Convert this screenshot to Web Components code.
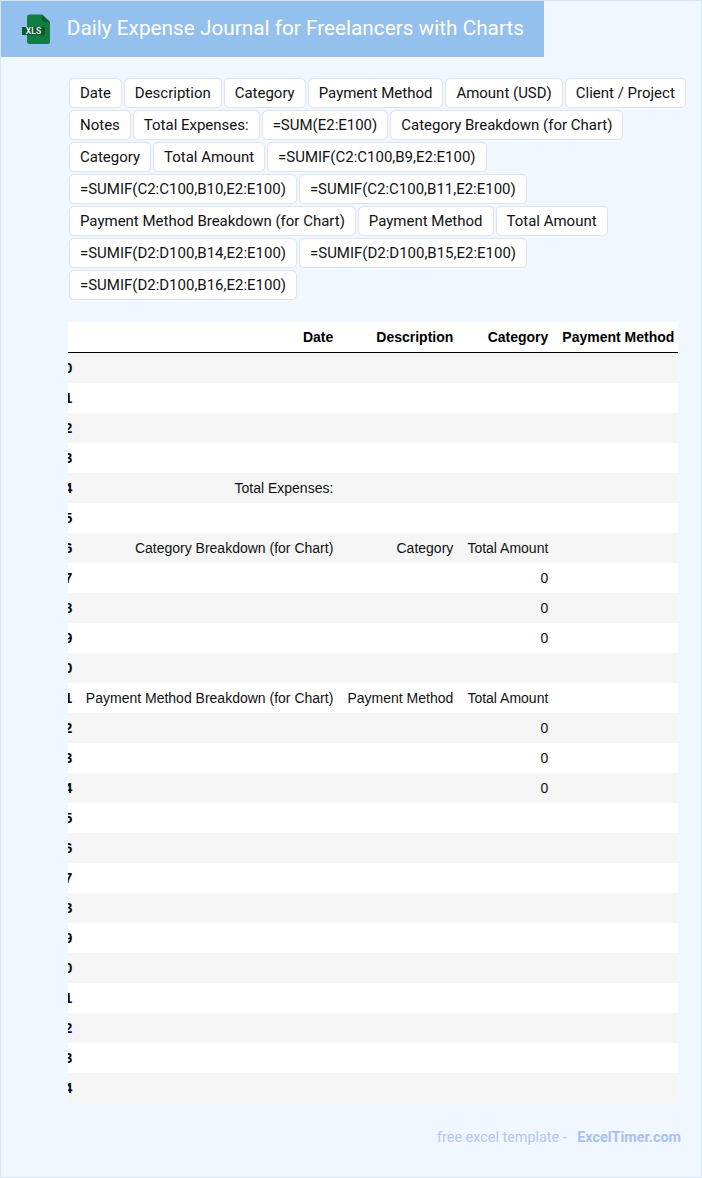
<!DOCTYPE html>
<html>
<head>
<meta charset="utf-8">
<title>Daily Expense Journal for Freelancers with Charts</title>
<style>
  html, body { margin: 0; padding: 0; }
  body { font-family: Roboto, "Liberation Sans", sans-serif; }
</style>
</head>
<body>
<journal-page>
  <title-bar>Daily Expense Journal for Freelancers with Charts</title-bar>
  <chip-list></chip-list>
  <sheet-table></sheet-table>
  <page-footer></page-footer>
</journal-page>

<script>
class JournalPage extends HTMLElement {
  constructor() {
    super();
    this.attachShadow({ mode: 'open' });
    this.shadowRoot.innerHTML = `
      <style>
        :host {
          display: block;
          box-sizing: border-box;
          width: 702px;
          height: 1178px;
          background: #f0f7ff;
          border: 1px solid #d8e4f0;
          overflow: hidden;
        }
      </style>
      <slot></slot>
    `;
  }
}

class TitleBar extends HTMLElement {
  constructor() {
    super();
    this.attachShadow({ mode: 'open' });
    this.shadowRoot.innerHTML = `
      <style>
        :host {
          display: flex;
          align-items: center;
          box-sizing: border-box;
          width: 543px;
          height: 56px;
          padding: 0 0 2px 21px;
          background: #93c0ec;
          color: #fff;
          font: 400 20.770px Roboto, sans-serif;
        }
        svg { flex: none; margin: 2px 15.800px 0 0; }
      </style>
      <svg width="29" height="32" viewBox="0 0 29 32">
        <path d="M8 1.500Q5 1.500 5 4.500V28.500Q5 31 8 31H25.500Q28 31 28 28.500V9L20 1.500Z" fill="#107c41"/>
        <path d="M20 1.500V7Q20 9 22 9H28Z" fill="#0b5c30"/>
        <rect x="0" y="14" width="23" height="8" fill="#0a5a30"/>
        <text x="11.500" y="21.200" text-anchor="middle" fill="#fff" font-family="Roboto, sans-serif" font-size="8.500" font-weight="500" letter-spacing=".2">XLS</text>
      </svg>
      <slot></slot>
    `;
  }
}

class ChipList extends HTMLElement {
  constructor() {
    super();
    this.attachShadow({ mode: 'open' });
    const labels = ['Date', 'Description', 'Category', 'Payment Method', 'Amount (USD)', 'Client / Project',
      'Notes', 'Total Expenses:', '=SUM(E2:E100)', 'Category Breakdown (for Chart)',
      'Category', 'Total Amount', '=SUMIF(C2:C100,B9,E2:E100)',
      '=SUMIF(C2:C100,B10,E2:E100)', '=SUMIF(C2:C100,B11,E2:E100)',
      'Payment Method Breakdown (for Chart)', 'Payment Method', 'Total Amount',
      '=SUMIF(D2:D100,B14,E2:E100)', '=SUMIF(D2:D100,B15,E2:E100)',
      '=SUMIF(D2:D100,B16,E2:E100)'];
    this.shadowRoot.innerHTML = `
      <style>
        :host {
          display: flex;
          flex-wrap: wrap;
          gap: 2px;
          box-sizing: border-box;
          width: 690px;
          padding: 21px 0 0 68px;
        }
        span {
          box-sizing: border-box;
          height: 30px;
          padding: 0 10px;
          background: #fff;
          border: 1px solid #dbe5f1;
          border-radius: 5px;
          color: #111;
          font: 400 14.995px/29px Roboto, sans-serif;
          white-space: nowrap;
        }
      </style>
      ${labels.map(l => `<span>${l}</span>`).join('')}
    `;
  }
}

class SheetTable extends HTMLElement {
  constructor() {
    super();
    this.attachShadow({ mode: 'open' });
    const cells = {
      4: ['Total Expenses:', '', ''],
      6: ['Category Breakdown (for Chart)', 'Category', 'Total Amount'],
      7: ['', '', '0'], 8: ['', '', '0'], 9: ['', '', '0'],
      11: ['Payment Method Breakdown (for Chart)', 'Payment Method', 'Total Amount'],
      12: ['', '', '0'], 13: ['', '', '0'], 14: ['', '', '0'],
    };
    let rows = '';
    for (let i = 0; i < 25; i++) {
      const c = cells[i] || ['', '', ''];
      rows += `<tr><th>${i}</th><td>${c[0]}</td><td>${c[1]}</td><td>${c[2]}</td><td></td></tr>`;
    }
    this.shadowRoot.innerHTML = `
      <style>
        :host {
          display: block;
          width: 610px;
          margin: 22px 0 0 67px;
          overflow: hidden;
        }
        table {
          table-layout: fixed;
          width: 641px;
          margin-left: -29.700px;
          border-collapse: separate;
          border-spacing: 0;
          background: #fff;
          color: #111;
          font: 14px "Liberation Sans", Arial, sans-serif;
        }
        th, td { height: 30px; padding: 0 5px 0 0; text-align: right; white-space: nowrap; box-sizing: border-box; }
        thead th { height: 31px; border-bottom: 1px solid #000; color: #000; }
        tbody tr:nth-child(odd) { background: #f5f5f5; }
        tbody th { color: #000; }
      </style>
      <table>
        <colgroup><col style="width:39px"><col style="width:261px"><col style="width:120px"><col style="width:95px"><col style="width:126px"></colgroup>
        <thead><tr><th></th><th>Date</th><th>Description</th><th>Category</th><th>Payment Method</th></tr></thead>
        <tbody>${rows}</tbody>
      </table>
    `;
  }
}

class PageFooter extends HTMLElement {
  constructor() {
    super();
    this.attachShadow({ mode: 'open' });
    this.shadowRoot.innerHTML = `
      <style>
        :host {
          display: flex;
          justify-content: flex-end;
          gap: 10px;
          padding: 26px 20px 0 0;
          color: #b3c6f5;
          font: 400 14.400px Roboto, sans-serif;
        }
        span { margin-right: .500px; }
        b { font-weight: 700; color: #a9bff3; }
      </style>
      <span>free excel template -</span><b>ExcelTimer.com</b>
    `;
  }
}

customElements.define('journal-page', JournalPage);
customElements.define('title-bar', TitleBar);
customElements.define('chip-list', ChipList);
customElements.define('sheet-table', SheetTable);
customElements.define('page-footer', PageFooter);
</script>
</body>
</html>
